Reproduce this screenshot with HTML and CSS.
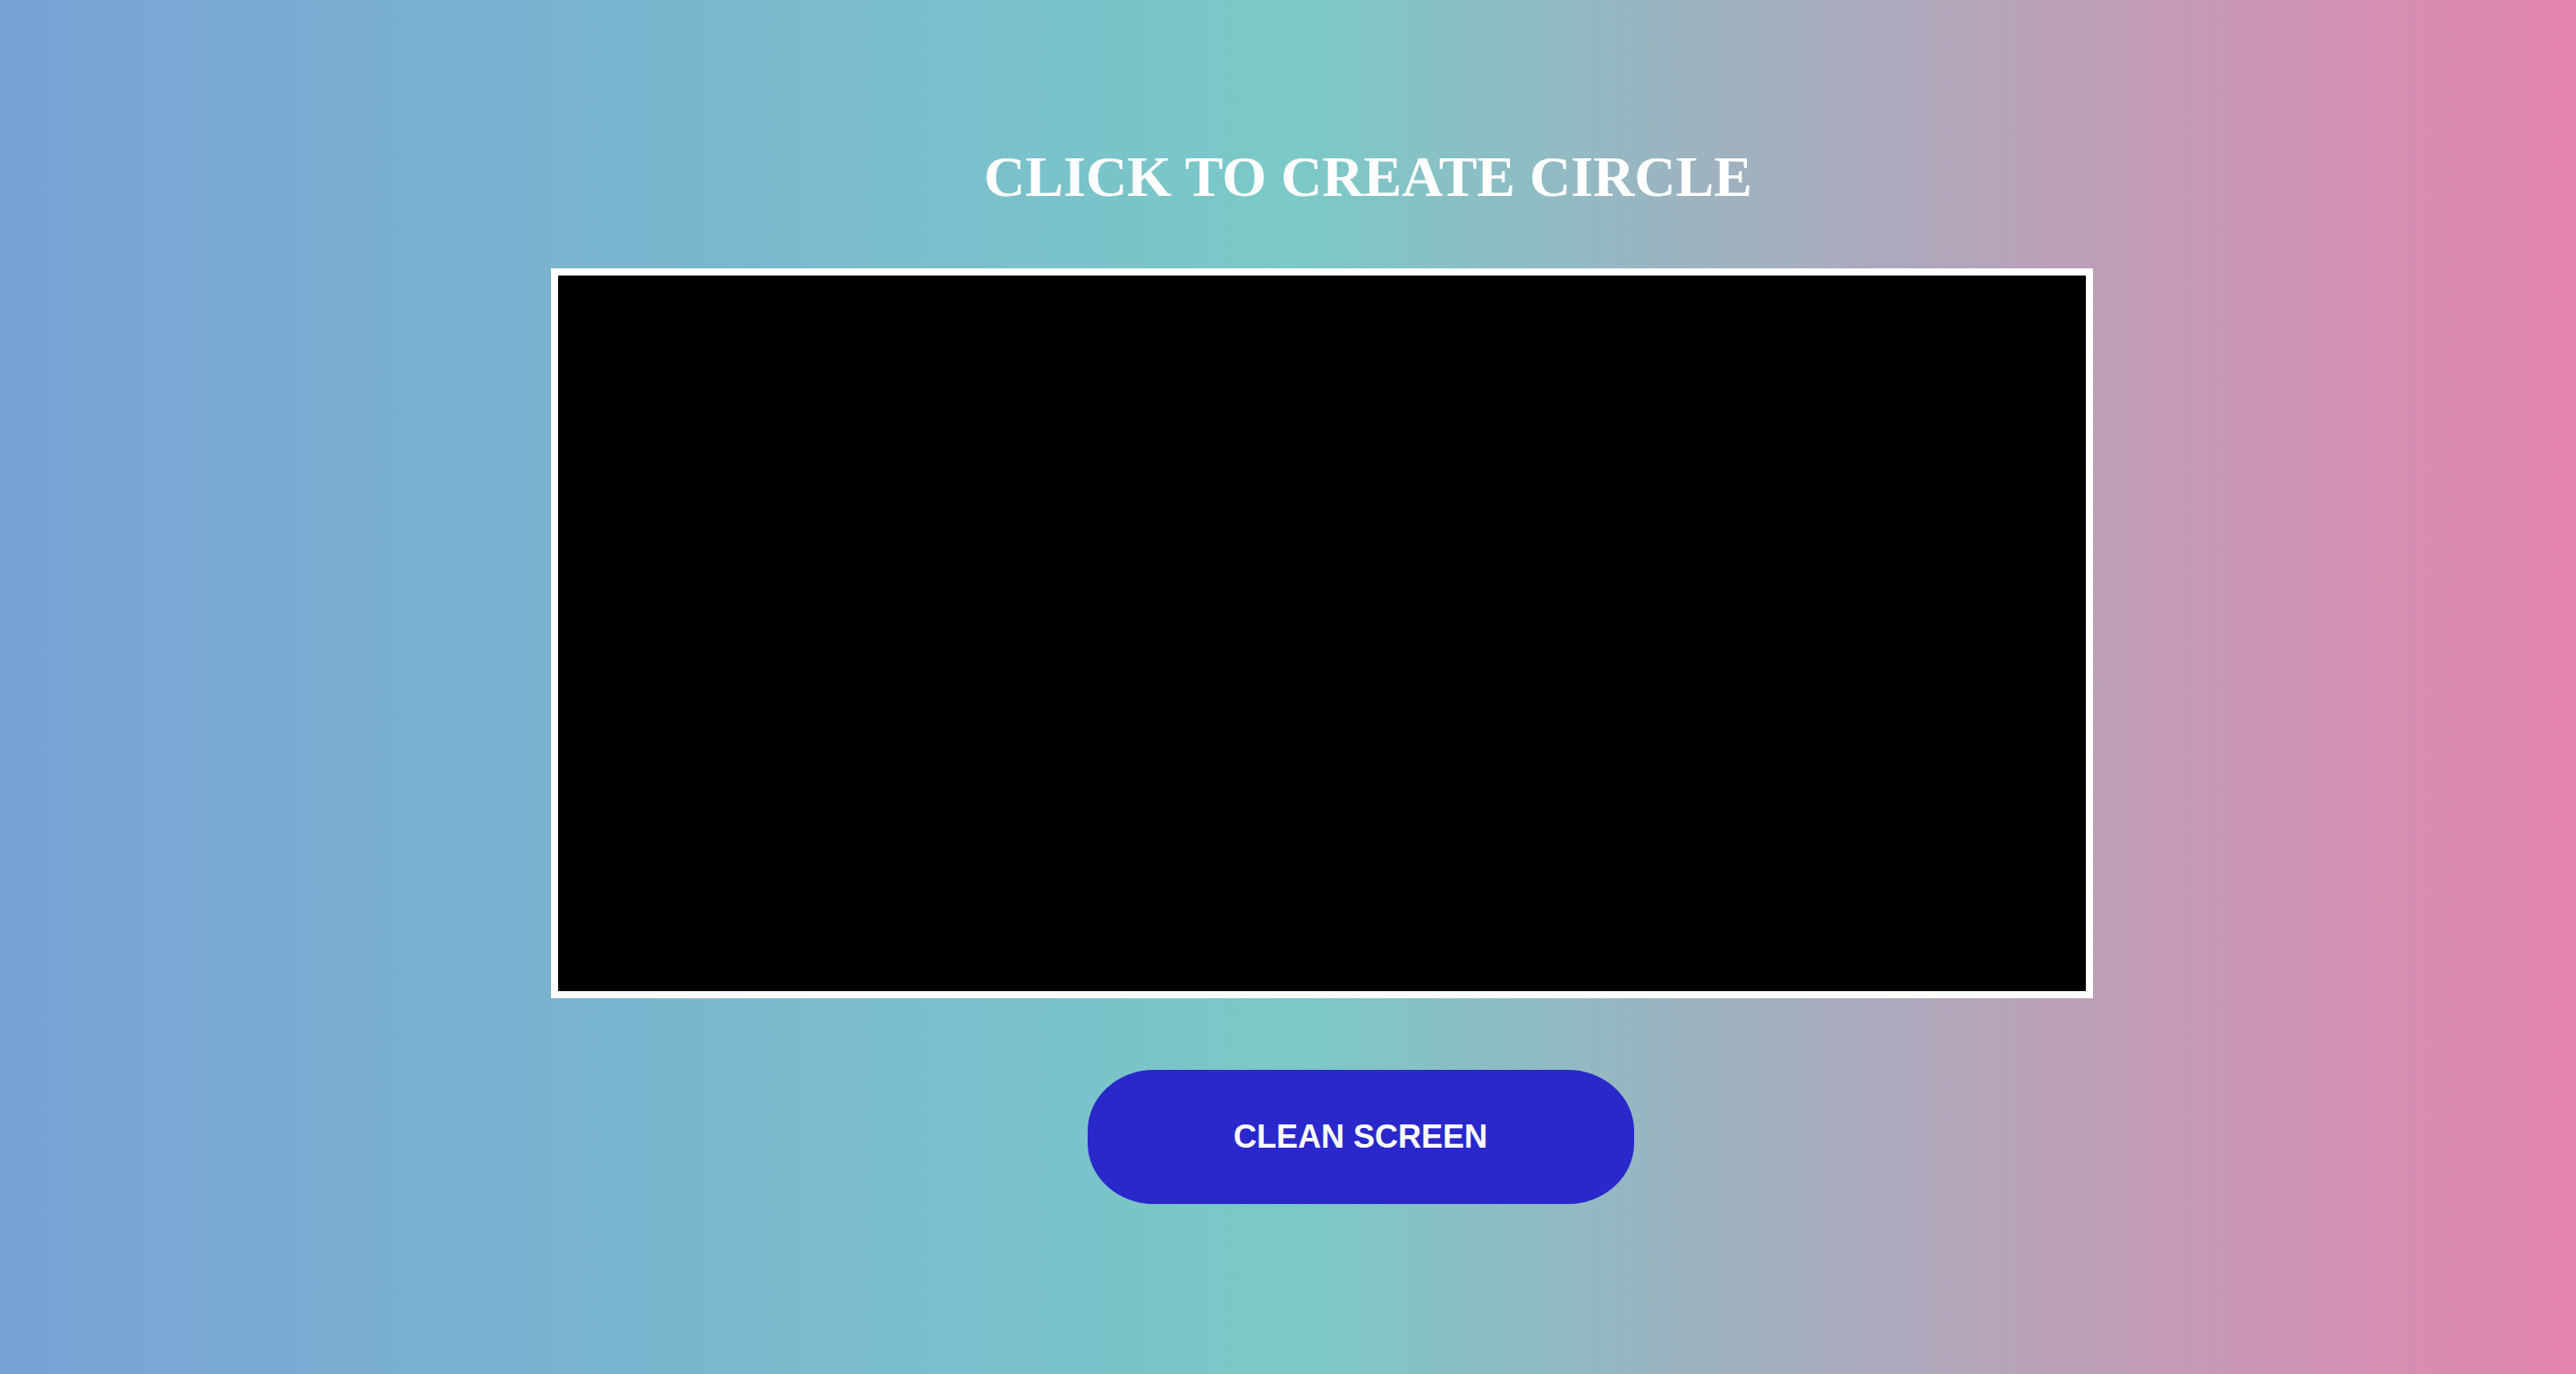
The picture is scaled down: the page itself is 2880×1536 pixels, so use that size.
FILE: index.html
```html
<!DOCTYPE html>
<html lang="en">
<head>
<meta charset="utf-8">
<title>Click to create circle</title>
<link rel="stylesheet" href="styles.css">
</head>
<body>
<main class="page">
  <h1 class="title">CLICK TO CREATE CIRCLE</h1>
  <canvas class="board" width="1708" height="800"></canvas>
  <button class="clean-btn" type="button">CLEAN SCREEN</button>
</main>
</body>
</html>
```
FILE: styles.css
```css
html, body {
  margin: 0;
  padding: 0;
}
body {
  min-height: 100vh;
  background: linear-gradient(to right, #78a3d5 0%, #7bc9c8 50%, #e585ae 100%);
  font-family: "Liberation Serif", "Times New Roman", serif;
}
.page {
  display: flex;
  flex-direction: column;
  align-items: center;
  padding-top: 162px;
}
.title {
  margin: 0 0 66px 179px;
  font-family: "Liberation Serif", "Times New Roman", serif;
  font-weight: 700;
  font-size: 64px;
  line-height: 72px;
  color: #ffffff;
}
.board {
  display: block;
  width: 1708px;
  height: 800px;
  margin-left: 76px;
  background: #000000;
  border: 8px solid #ffffff;
}
.clean-btn {
  margin: 80px 0 0 162px;
  width: 611px;
  height: 150px;
  border: none;
  border-radius: 74px / 68px;
  background: #2a28cb;
  color: #ffffff;
  font-family: "Liberation Sans", Arial, sans-serif;
  font-weight: 700;
  font-size: 36px;
  cursor: pointer;
}
```
